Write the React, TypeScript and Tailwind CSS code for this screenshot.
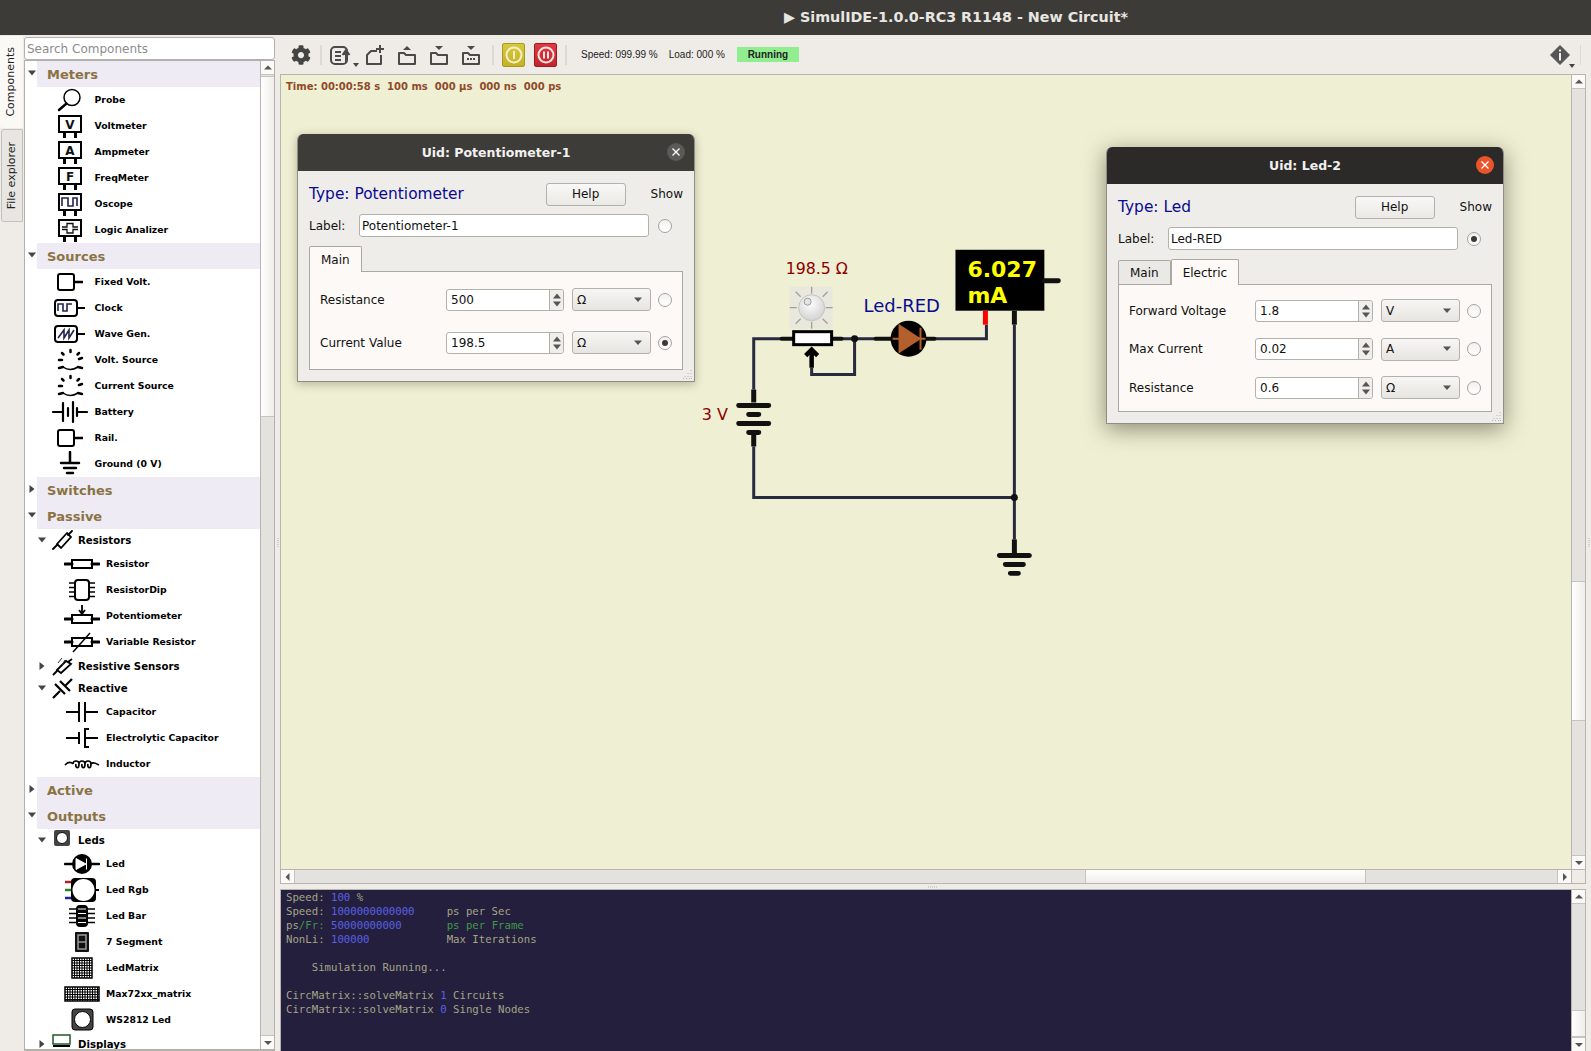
import { FaCog } from "react-icons/fa"

type TreeRow =
    | { kind: "cat"; label: string; open: boolean }
    | { kind: "sub"; label: string; icon: string; open: boolean }
    | { kind: "item"; label: string; icon: string; level: 1 | 2 }

const treeRows: TreeRow[] = [
    { kind: "cat", label: "Meters", open: true },
    { kind: "item", label: "Probe", icon: "probe", level: 1 },
    { kind: "item", label: "Voltmeter", icon: "V", level: 1 },
    { kind: "item", label: "Ampmeter", icon: "A", level: 1 },
    { kind: "item", label: "FreqMeter", icon: "F", level: 1 },
    { kind: "item", label: "Oscope", icon: "oscope", level: 1 },
    { kind: "item", label: "Logic Analizer", icon: "logic", level: 1 },
    { kind: "cat", label: "Sources", open: true },
    { kind: "item", label: "Fixed Volt.", icon: "fixed", level: 1 },
    { kind: "item", label: "Clock", icon: "clock", level: 1 },
    { kind: "item", label: "Wave Gen.", icon: "wave", level: 1 },
    { kind: "item", label: "Volt. Source", icon: "source", level: 1 },
    { kind: "item", label: "Current Source", icon: "source", level: 1 },
    { kind: "item", label: "Battery", icon: "battery", level: 1 },
    { kind: "item", label: "Rail.", icon: "fixed", level: 1 },
    { kind: "item", label: "Ground (0 V)", icon: "ground", level: 1 },
    { kind: "cat", label: "Switches", open: false },
    { kind: "cat", label: "Passive", open: true },
    { kind: "sub", label: "Resistors", icon: "resistors", open: true },
    { kind: "item", label: "Resistor", icon: "resistor", level: 2 },
    { kind: "item", label: "ResistorDip", icon: "dip", level: 2 },
    { kind: "item", label: "Potentiometer", icon: "pot", level: 2 },
    { kind: "item", label: "Variable Resistor", icon: "variable", level: 2 },
    { kind: "sub", label: "Resistive Sensors", icon: "sensors", open: false },
    { kind: "sub", label: "Reactive", icon: "reactive", open: true },
    { kind: "item", label: "Capacitor", icon: "capacitor", level: 2 },
    { kind: "item", label: "Electrolytic Capacitor", icon: "electro", level: 2 },
    { kind: "item", label: "Inductor", icon: "inductor", level: 2 },
    { kind: "cat", label: "Active", open: false },
    { kind: "cat", label: "Outputs", open: true },
    { kind: "sub", label: "Leds", icon: "leds", open: true },
    { kind: "item", label: "Led", icon: "led", level: 2 },
    { kind: "item", label: "Led Rgb", icon: "rgb", level: 2 },
    { kind: "item", label: "Led Bar", icon: "bar", level: 2 },
    { kind: "item", label: "7 Segment", icon: "seg", level: 2 },
    { kind: "item", label: "LedMatrix", icon: "matrix", level: 2 },
    { kind: "item", label: "Max72xx_matrix", icon: "max", level: 2 },
    { kind: "item", label: "WS2812 Led", icon: "ws", level: 2 },
    { kind: "sub", label: "Displays", icon: "displays", open: false },
]

function Caret({ open }: { open: boolean }) {
    return (
        <svg width="8" height="8" viewBox="0 0 8 8" className="shrink-0">
            <path d={open ? "M0 1.5h8L4 6.5z" : "M1.5 0v8L6.5 4z"} fill="#444" />
        </svg>
    )
}

function gridLines(x: number, y: number, w: number, h: number, step: number) {
    const lines = []
    for (let i = x + step; i < x + w; i += step) lines.push(`M${i} ${y}V${y + h}`)
    for (let j = y + step; j < y + h; j += step) lines.push(`M${x} ${j}H${x + w}`)
    return lines.join("")
}

function TreeIcon({ name }: { name: string }) {
    const k = { fill: "none", stroke: "#000", strokeWidth: 2 }
    const navy = { fill: "none", stroke: "#22224c", strokeWidth: 1.6 }
    const meterBody = (
        <>
            <rect x="7" y="3" width="22" height="16" {...k} />
            <path d="M12.5 19v6M23.5 19v6" stroke="#000" strokeWidth="3" />
        </>
    )
    switch (name) {
        case "probe":
            return (
                <>
                    <circle cx="20" cy="10.5" r="8" fill="none" stroke="#000" strokeWidth="1.5" />
                    <path d="M14.5 16.5L7 23" stroke="#000" strokeWidth="2.5" strokeLinecap="round" />
                </>
            )
        case "V":
        case "A":
        case "F":
            return (
                <>
                    {meterBody}
                    <text x="18" y="15.5" textAnchor="middle" fontSize="12" fontWeight="700" fontFamily="DejaVu Sans" fill="#111">
                        {name}
                    </text>
                </>
            )
        case "oscope":
            return (
                <>
                    {meterBody}
                    <path d="M10 15V7h6v8h5V7h4v8" {...navy} />
                </>
            )
        case "logic":
            return (
                <>
                    {meterBody}
                    <path d="M10 10h5V6.500h6V10h5M10 12.500h5V16h6v-3.500h5" fill="none" stroke="#111" strokeWidth="1.300" />
                </>
            )
        case "fixed":
            return (
                <>
                    <rect x="6" y="5" width="16" height="16" rx="2" {...k} />
                    <path d="M22 13h9" stroke="#000" strokeWidth="2.500" />
                </>
            )
        case "clock":
            return (
                <>
                    <rect x="3" y="5" width="22" height="16" rx="3" {...k} />
                    <path d="M25 13h8" stroke="#000" strokeWidth="2" />
                    <path d="M6 16V9h5v7h4V9h5" {...navy} />
                </>
            )
        case "wave":
            return (
                <>
                    <rect x="3" y="5" width="22" height="16" rx="3" {...k} />
                    <path d="M25 13h8" stroke="#000" strokeWidth="2" />
                    <path d="M6 17l6-8v8l5-8v8l5-8" {...navy} />
                </>
            )
        case "source":
            return (
                <>
                    <path
                        d="M18.500 3v2M10 6l1.500 1.500M27 6l-1.500 1.500M7 13h3M27 12l3-1M7 21l4-1M30 21l-4-1"
                        stroke="#000"
                        strokeWidth="2.500"
                        strokeLinecap="round"
                    />
                    <path d="M11 20q7 5 15 0" fill="none" stroke="#000" strokeWidth="1.500" />
                </>
            )
        case "battery":
            return (
                <path
                    d="M1 13h10M11 4v18M16 9v8M21 3v20M25 9v8M26 13h9"
                    stroke="#000"
                    strokeWidth="2.200"
                    strokeLinecap="round"
                    fill="none"
                />
            )
        case "ground":
            return <path d="M18 1v10M9 12h18M12 17h12M15 22h6" stroke="#000" strokeWidth="2.500" strokeLinecap="round" />
        case "resistor":
            return (
                <>
                    <rect x="8" y="9" width="20" height="8" fill="none" stroke="#000" strokeWidth="2" />
                    <path d="M1 13h7M28 13h7" stroke="#000" strokeWidth="3" strokeLinecap="round" />
                </>
            )
        case "dip":
            return (
                <>
                    <rect x="11" y="3" width="14" height="20" rx="3" {...k} />
                    <path d="M5 6h6M5 10.500h6M5 15h6M5 19.500h6M25 6h6M25 10.500h6M25 15h6M25 19.500h6" stroke="#000" strokeWidth="1.500" />
                </>
            )
        case "pot":
            return (
                <>
                    <rect x="8" y="12" width="20" height="8" fill="none" stroke="#000" strokeWidth="2" />
                    <path d="M1 16h7M28 16h7" stroke="#000" strokeWidth="3" strokeLinecap="round" />
                    <path d="M18 2v9M15 7l3 4 3-4" fill="none" stroke="#000" strokeWidth="1.800" />
                </>
            )
        case "variable":
            return (
                <>
                    <rect x="8" y="9" width="20" height="8" fill="none" stroke="#000" strokeWidth="2" />
                    <path d="M1 13h7M28 13h7" stroke="#000" strokeWidth="3" strokeLinecap="round" />
                    <path d="M9 23L26 4" stroke="#000" strokeWidth="1.500" />
                </>
            )
        case "capacitor":
            return <path d="M2 13h13M15 3v20M21 3v20M21 13h13" stroke="#000" strokeWidth="2" fill="none" />
        case "electro":
            return <path d="M2 13h13M15 7v12M25 4h-4v18h4M21 13h13" stroke="#000" strokeWidth="2" fill="none" />
        case "inductor":
            return (
                <path
                    d="M1 14c3-3 6-3 8-1M9 13c0-4 6-4 6 0c0 5-4 5-3 0M15 13c0-4 6-4 6 0c0 5-4 5-3 0M21 13c0-4 6-4 6 0c0 5-4 5-3 0M27 13c2-2 4-1 8 1"
                    fill="none"
                    stroke="#000"
                    strokeWidth="1.700"
                />
            )
        case "led":
            return (
                <>
                    <circle cx="18" cy="13" r="10" fill="#000" />
                    <path d="M1 13h34" stroke="#000" strokeWidth="2.500" strokeLinecap="round" />
                    <path d="M12 7.500v11L22 13zM22.500 7.500v11" fill="#fff" stroke="#fff" strokeWidth="1" />
                </>
            )
        case "rgb":
            return (
                <>
                    <path d="M1 5h8" stroke="#a22" strokeWidth="2.500" />
                    <path d="M1 13h8" stroke="#282" strokeWidth="2.500" />
                    <path d="M1 21h8" stroke="#22a" strokeWidth="2.500" />
                    <path d="M32 13h3" stroke="#000" strokeWidth="2" />
                    <rect x="7" y="1" width="25" height="24" rx="4" fill="#000" />
                    <circle cx="19.500" cy="13" r="11" fill="#fff" />
                </>
            )
        case "bar":
            return (
                <>
                    <rect x="12" y="2" width="12" height="22" rx="4" fill="#000" />
                    <path d="M5 6h26M5 10.500h26M5 15h26M5 19.500h26" stroke="#000" strokeWidth="1.700" />
                    <path d="M14 6h8M14 10.500h8M14 15h8M14 19.500h8" stroke="#fff" strokeWidth="1" />
                </>
            )
        case "seg":
            return (
                <>
                    <rect x="11" y="3" width="14" height="20" rx="1" fill="#111" />
                    <path d="M14 6h8v14h-8zM14 13h8" fill="none" stroke="#9a9a9a" strokeWidth="1.500" />
                </>
            )
        case "matrix":
            return (
                <>
                    <rect x="8" y="3" width="20" height="20" fill="#fff" stroke="#000" strokeWidth="1.500" />
                    <path d={gridLines(8, 3, 20, 20, 2.500)} stroke="#000" strokeWidth="1" />
                </>
            )
        case "max":
            return (
                <>
                    <rect x="1" y="6" width="34" height="14" fill="#fff" stroke="#000" strokeWidth="1.500" />
                    <path d={gridLines(1, 6, 34, 14, 2.500)} stroke="#000" strokeWidth="1" />
                </>
            )
        case "ws":
            return (
                <>
                    <rect x="8" y="2" width="21" height="21" rx="3" fill="#444" stroke="#000" strokeWidth="1" />
                    <circle cx="18.500" cy="12.500" r="8" fill="#fff" stroke="#000" strokeWidth="1" />
                </>
            )
        default:
            return null
    }
}

function SubIcon({ name }: { name: string }) {
    switch (name) {
        case "resistors":
            return (
                <path d="M2 20l4-4M17 6l4-4M6 15L16 4l4 4L10 19z" fill="none" stroke="#000" strokeWidth="1.800" strokeLinecap="round" />
            )
        case "sensors":
            return (
                <>
                    <path d="M2 20l4-4M17 7l4-3M6 15L15 6l5 3L10 18z" fill="none" stroke="#000" strokeWidth="1.800" />
                    <path d="M7 8l4-5M11 10l3-5" stroke="#333" strokeWidth="1" />
                </>
            )
        case "reactive":
            return <path d="M2 21l7-7M14 9l7-7M4 7l10 10M9 4l10 10" fill="none" stroke="#000" strokeWidth="2.200" />
        case "leds":
            return (
                <>
                    <rect x="3" y="1" width="16" height="16" rx="2" fill="#444" />
                    <circle cx="11" cy="9" r="5.500" fill="#fff" stroke="#111" strokeWidth="1" />
                </>
            )
        case "displays":
            return (
                <>
                    <rect x="2" y="2" width="17" height="9" fill="#fff" stroke="#1d5a2a" strokeWidth="1.500" />
                    <path d="M2 13h17" stroke="#000" strokeWidth="2" />
                </>
            )
        default:
            return null
    }
}

function TreeList() {
    return (
        <div className="h-full w-[235px] overflow-hidden bg-white text-black">
            {treeRows.map((row) => {
                if (row.kind === "cat") {
                    return (
                        <div key={row.label} className="flex h-[26px] items-center">
                            <div className="flex w-[12px] justify-center pb-[2px] pl-[1px]">
                                <Caret open={row.open} />
                            </div>
                            <div className="flex h-full flex-1 items-center bg-[#efebf5] pl-[10px] text-[13px] leading-none font-bold text-[#8a7342]">
                                {row.label}
                            </div>
                        </div>
                    )
                }
                if (row.kind === "sub") {
                    return (
                        <div key={row.label} className="flex h-[22px] items-center text-[10.200px] font-bold">
                            <div className="ml-[13px]">
                                <Caret open={row.open} />
                            </div>
                            <svg width="22" height="22" viewBox="0 0 22 22" className="ml-[5px] shrink-0">
                                <SubIcon name={row.icon} />
                            </svg>
                            <span className="ml-[5px] pt-[2px]">{row.label}</span>
                        </div>
                    )
                }
                return (
                    <div key={row.label} className="flex h-[26px] items-center text-[9.300px] font-bold">
                        <svg
                            width="36"
                            height="26"
                            viewBox="0 0 36 26"
                            className={row.level === 1 ? "ml-[27px] shrink-0" : "ml-[39px] shrink-0"}
                        >
                            <TreeIcon name={row.icon} />
                        </svg>
                        <span className={row.level === 1 ? "ml-[6.500px]" : "ml-[6px]"}>{row.label}</span>
                    </div>
                )
            })}
        </div>
    )
}

function ScrollArrow({ dir }: { dir: "up" | "down" | "left" | "right" }) {
    const d = {
        up: "M1 6.500h8L5 2.500z",
        down: "M1 3h8L5 7z",
        left: "M6.500 1v8L2.500 5z",
        right: "M3 1v8L7 5z",
    }[dir]
    return (
        <svg width="10" height="10" viewBox="0 0 10 10">
            <path d={d} fill="#555" />
        </svg>
    )
}

// before / thumb are px heights of the track part above the thumb and of the thumb
function VScrollbar({ before, thumb }: { before: number; thumb: number }) {
    return (
        <div className="flex h-full w-[14px] shrink-0 flex-col border-l border-[#b8b5b0] bg-[#e3e2de]">
            <div className="flex h-[14px] shrink-0 items-center justify-center border-b border-[#c6c4bf] bg-[#fbfaf8]">
                <ScrollArrow dir="up" />
            </div>
            <div className="min-h-0 flex-1">
                <div style={{ height: before }} />
                <div style={{ height: thumb }} className="border-y border-[#c6c4bf] bg-gradient-to-r from-white to-[#f0eeea]" />
            </div>
            <div className="flex h-[14px] shrink-0 items-center justify-center border-t border-[#c6c4bf] bg-[#fbfaf8]">
                <ScrollArrow dir="down" />
            </div>
        </div>
    )
}

function Radio({ checked }: { checked?: boolean }) {
    return (
        <div className="flex h-[14px] w-[14px] shrink-0 items-center justify-center rounded-full border border-[#a5a39e] bg-gradient-to-b from-[#f2f0ed] to-white">
            {checked && <div className="h-[6px] w-[6px] rounded-full bg-[#3a3a3a]" />}
        </div>
    )
}

function SpinBox({ value }: { value: string }) {
    return (
        <div className="flex h-[22px] w-[120px] items-center rounded-[3px] border border-[#b3b1ac] bg-white">
            <span className="flex-1 pl-[4px]">{value}</span>
            <div className="flex h-full w-[14px] flex-col items-center justify-center gap-[2px] rounded-r-[3px] border-l border-[#b3b1ac] bg-[#f0eeeb]">
                <svg width="8" height="6" viewBox="0 0 8 6">
                    <path d="M0 5.500h8L4 .5z" fill="#555" />
                </svg>
                <svg width="8" height="6" viewBox="0 0 8 6">
                    <path d="M0 .5h8L4 5.500z" fill="#555" />
                </svg>
            </div>
        </div>
    )
}

function Combo({ value }: { value: string }) {
    return (
        <div className="flex h-[23px] w-[79px] items-center justify-between rounded-[3px] border border-[#b3b1ac] bg-gradient-to-b from-[#f7f6f4] to-[#e7e5e1] pr-[7px] pl-[4px]">
            <span>{value}</span>
            <svg width="9" height="6" viewBox="0 0 9 6">
                <path d="M0 .5h8L4 5z" fill="#555" />
            </svg>
        </div>
    )
}

type DialogRow = { name: string; value: string; unit: string; checked?: boolean }

function PropDialog(props: {
    uid: string
    type: string
    label: string
    labelShown?: boolean
    tabs: string[]
    activeTab: string
    rows: DialogRow[]
    focused?: boolean
    className: string
    panelClass: string
}) {
    const { uid, type, label, labelShown, tabs, activeTab, rows, focused, className, panelClass } = props
    return (
        <div
            className={`absolute w-[398px] overflow-hidden rounded-t-[6px] border border-t-0 border-[#8f8d86] bg-[#efedea] text-[12px] text-[#111] ${className} ${
                focused ? "shadow-[0_5px_22px_rgba(40,40,20,0.5)]" : "shadow-[0_2px_10px_rgba(40,40,20,0.3)]"
            }`}
        >
            <div
                className={`relative flex h-[37px] items-center justify-center pt-[1px] text-[12.500px] font-bold text-[#f2f1ef] ${
                    focused ? "bg-[#2c2a28]" : "bg-[#3e3c39]"
                }`}
            >
                {`Uid: ${uid}`}
                <div
                    className={`absolute top-[9px] right-[9px] flex h-[18px] w-[18px] items-center justify-center rounded-full ${
                        focused ? "bg-[#e9542a]" : "bg-[#5c5a58]"
                    }`}
                >
                    <svg width="10" height="10" viewBox="0 0 10 10">
                        <path d="M1.500 1.500l7 7M8.500 1.500l-7 7" stroke="#fff" strokeWidth="1.300" />
                    </svg>
                </div>
            </div>
            <div className="relative pt-[12px] pr-[10px] pb-[11px] pl-[11px]">
                <div className="flex h-[22px] items-center">
                    <span className="flex-1 pt-[2px] text-[15.400px] text-[#0a0a90]">{`Type: ${type}`}</span>
                    <div className="flex h-[23px] w-[80px] items-center justify-center rounded-[3px] border border-[#b3b1ac] bg-gradient-to-b from-[#f9f8f6] to-[#ebe9e5]">
                        Help
                    </div>
                    <span className="ml-[25px] pr-[1px]">Show</span>
                </div>
                <div className="mt-[9px] flex h-[23px] items-center">
                    <span className="w-[50px] shrink-0">Label:</span>
                    <div className="flex h-[23px] w-[290px] items-center rounded-[3px] border border-[#b3b1ac] bg-white pl-[2px]">{label}</div>
                    <div className="ml-[9px]">
                        <Radio checked={labelShown} />
                    </div>
                </div>
                <div className="mt-[9px] flex h-[25px] items-end">
                    {tabs.map((tab) =>
                        tab === activeTab ? (
                            <div
                                key={tab}
                                className="relative z-10 -mb-px flex h-[26px] items-center rounded-t-[2px] border border-b-0 border-[#aaa8a3] bg-[#fcf9f6] px-[11px]"
                            >
                                {tab}
                            </div>
                        ) : (
                            <div key={tab} className="flex h-[24px] items-center rounded-t-[2px] border border-b-0 border-[#aaa8a3] bg-[#ebe9e5] px-[11px]">
                                {tab}
                            </div>
                        ),
                    )}
                </div>
                <div className={`flex w-[374px] flex-col border border-[#aaa8a3] bg-[#fcf9f6] pr-[10px] pl-[10px] ${panelClass}`}>
                    {rows.map((row) => (
                        <div key={row.name} className="flex h-[23px] items-center">
                            <span className="w-[126px] shrink-0">{row.name}</span>
                            <SpinBox value={row.value} />
                            <div className="ml-[8px]">
                                <Combo value={row.unit} />
                            </div>
                            <div className="ml-[7px]">
                                <Radio checked={row.checked} />
                            </div>
                        </div>
                    ))}
                </div>
                <svg width="11" height="11" viewBox="0 0 11 11" className="absolute right-[1px] bottom-[1px]">
                    <path d="M9 1v1M6 4v1M9 4v1M3 7v1M6 7v1M9 7v1M1 9.500h1M4 9.500h1M7 9.500h1M9 9.500h1" stroke="#b5b3ae" strokeWidth="1" />
                </svg>
            </div>
        </div>
    )
}

const wireCol = "#282a40"

function Circuit() {
    return (
        <svg viewBox="281 75 1291 795" className="absolute inset-0 h-full w-full">
            <defs>
                <radialGradient id="knob" cx="45%" cy="35%" r="70%">
                    <stop offset="0%" stopColor="#fdfdfd" />
                    <stop offset="100%" stopColor="#cfcfcf" />
                </radialGradient>
            </defs>
            {/* wires */}
            <path
                d="M754 390V339H782M842 339H876M935 339H987V325M1015 325V540M754 447V498H1015M812 368V375H855V339"
                fill="none"
                stroke={wireCol}
                strokeWidth="3"
            />
            <circle cx="855" cy="339" r="3.500" fill="#111" />
            <circle cx="1015" cy="498" r="3.500" fill="#111" />
            {/* battery */}
            <path d="M754 390v13M754 433v14" stroke="#111" strokeWidth="5" />
            <path d="M739 406h30M749 415h10M739 424h30M749 433h10" stroke="#111" strokeWidth="5" strokeLinecap="round" />
            <text x="702" y="420" fontFamily="DejaVu Sans" fontSize="16" fill="#8b0000">
                3 V
            </text>
            {/* potentiometer */}
            <rect x="790" y="287" width="43" height="42" fill="#e8e8dc" />
            <path
                d="M812 287v7M812 322v7M790 308h7M826 308h7M796 292l5 5M828 292l-5 5M796 324l5-5M828 324l-5-5"
                stroke="#a0a09c"
                strokeWidth="1.300"
            />
            <circle cx="812" cy="308" r="13" fill="url(#knob)" stroke="#c4c4c0" />
            <circle cx="808" cy="302" r="3.500" fill="#e4e4e4" stroke="#9c9c9c" />
            <path d="M782 339h12M832 339h10" stroke="#111" strokeWidth="4" strokeLinecap="round" />
            <rect x="794" y="332" width="38" height="13" fill="#fff" stroke="#000" strokeWidth="3" />
            <path d="M812 368v-18M806 356l6-6 6 6" fill="none" stroke="#000" strokeWidth="4.500" />
            <text x="786" y="274" fontFamily="DejaVu Sans" fontSize="15.800" fill="#8b0000">
                198.5 Ω
            </text>
            {/* led */}
            <text x="864" y="312" fontFamily="DejaVu Sans" fontSize="18" fill="#0a0a90">
                Led-RED
            </text>
            <path d="M876 339h16M927 339h8" stroke="#111" strokeWidth="4" strokeLinecap="round" />
            <circle cx="909" cy="339" r="18" fill="#000" />
            <path d="M900 326v26l20-13zM893 339h33M921 328v22" fill="#b45f2e" stroke="#b45f2e" strokeWidth="2" />
            {/* ampmeter */}
            <rect x="956" y="250" width="89" height="61" fill="#000" />
            <path d="M1045 281h14" stroke="#111" strokeWidth="5" strokeLinecap="round" />
            <path d="M986 311v14" stroke="#f00" strokeWidth="5" />
            <path d="M1015 311v14" stroke="#111" strokeWidth="5" />
            <text x="968" y="277" fontFamily="DejaVu Sans" fontSize="22" fontWeight="700" fill="#ff0">
                6.027
            </text>
            <text x="968" y="303" fontFamily="DejaVu Sans" fontSize="22" fontWeight="700" fill="#ff0">
                mA
            </text>
            {/* ground */}
            <path d="M1015 540v16" stroke="#111" strokeWidth="5" />
            <path d="M1000 556h30M1006 565h18M1011 574h8" stroke="#111" strokeWidth="5" strokeLinecap="round" />
        </svg>
    )
}

function PowerButton({ color }: { color: "yellow" | "red" }) {
    const yellow = color === "yellow"
    return (
        <div
            className={`flex h-[24px] w-[23px] items-center justify-center rounded-[2px] border ${
                yellow ? "border-[#a89a20] bg-gradient-to-b from-[#d8c83c] to-[#c4b128]" : "border-[#9c1c22] bg-gradient-to-b from-[#e03a40] to-[#c2262c]"
            }`}
        >
            <svg width="18" height="18" viewBox="0 0 18 18">
                <circle cx="9" cy="9" r="7.500" fill="none" stroke={yellow ? "#f4efc4" : "#fbe4e4"} strokeWidth="2" />
                {yellow ? (
                    <path d="M9 5v8" stroke="#f4efc4" strokeWidth="2" />
                ) : (
                    <path d="M7 5.500v7M11 5.500v7" stroke="#fbe4e4" strokeWidth="2" />
                )}
            </svg>
        </div>
    )
}

function Sep() {
    return <div className="h-[20px] w-[2px] shrink-0 bg-[#dcdad5]" />
}

function Toolbar() {
    const ico = { fill: "none", stroke: "#4a4a4a", strokeWidth: 2, strokeLinejoin: "round" as const }
    return (
        <div className="flex h-[39px] shrink-0 items-center pl-[11px] text-[#222]">
            <FaCog className="h-[20px] w-[20px] shrink-0 text-[#444]" />
            <div className="ml-[9px]"><Sep /></div>
            <svg width="24" height="24" viewBox="0 0 24 24" className="ml-[7px] shrink-0">
                <rect x="2" y="4" width="16" height="17" rx="4" {...ico} />
                <path d="M6 9h6M6 13h6M6 17h6" {...ico} />
                <path d="M17 20V9M13.500 12L17 7l3.500 5" fill="#4a4a4a" stroke="#4a4a4a" strokeWidth="2" />
            </svg>
            <svg width="6" height="4" viewBox="0 0 6 4" className="mt-[20px] shrink-0">
                <path d="M0 0h6L3 4z" fill="#444" />
            </svg>
            <svg width="20" height="22" viewBox="0 0 20 22" className="ml-[6px] shrink-0">
                <path d="M12 7H6L2 11v9h14V11" {...ico} />
                <path d="M15 1v8M11 5h8" stroke="#4a4a4a" strokeWidth="2" />
            </svg>
            <svg width="20" height="22" viewBox="0 0 20 22" className="ml-[12px] shrink-0">
                <path d="M2 20V9h5l2 2h9v9z" {...ico} />
                <path d="M6 6l4-4 4 4z" fill="#4a4a4a" />
            </svg>
            <svg width="20" height="22" viewBox="0 0 20 22" className="ml-[12px] shrink-0">
                <path d="M2 20V9h5l2 2h9v9z" {...ico} />
                <path d="M6 2l4 4 4-4z" fill="#4a4a4a" />
            </svg>
            <svg width="20" height="22" viewBox="0 0 20 22" className="ml-[12px] shrink-0">
                <path d="M2 20V9h5l2 2h9v9z" {...ico} />
                <path d="M6 2l4 4 4-4z" fill="#4a4a4a" />
                <path d="M6 15h2M9 15h2M12 15h2" stroke="#4a4a4a" strokeWidth="2" />
            </svg>
            <div className="ml-[11px]"><Sep /></div>
            <div className="ml-[8px]"><PowerButton color="yellow" /></div>
            <div className="ml-[9px]"><PowerButton color="red" /></div>
            <div className="ml-[8px]"><Sep /></div>
            <span className="ml-[14px] font-['Liberation_Sans',sans-serif] text-[10px]">Speed: 099.99 %</span>
            <span className="ml-[11px] font-['Liberation_Sans',sans-serif] text-[10px]">Load: 000 %</span>
            <div className="ml-[12px] flex h-[15px] w-[62px] items-center justify-center bg-[#90ee90] font-['Liberation_Sans',sans-serif] text-[10px] font-bold">
                Running
            </div>
            <div className="flex-1" />
            <svg width="20" height="20" viewBox="0 0 20 20" className="shrink-0">
                <path d="M10 0.500L19.500 10 10 19.500 .5 10z" fill="#555" stroke="#555" strokeLinejoin="round" strokeWidth="1" />
                <path d="M10 4.500v2M10 8v7.500" stroke="#f0eeea" strokeWidth="2" />
            </svg>
            <svg width="6" height="4" viewBox="0 0 6 4" className="mt-[22px] ml-[-1px] shrink-0">
                <path d="M0 0h6L3 4z" fill="#444" />
            </svg>
            <div className="mr-[5px] ml-[5px] h-[20px] w-px bg-[#dcdad5]" />
        </div>
    )
}

function Console() {
    const b = "text-[#5a5fe6]"
    const g = "text-[#3f9a48]"
    return (
        <pre className="h-full min-w-0 flex-1 overflow-hidden bg-[#231f3d] pt-[1px] pl-[5px] font-['DejaVu_Sans_Mono',monospace] text-[10.680px] leading-[14px] text-[#a5a585]">
            {"Speed: "}<span className={b}>100</span>{" %\n"}
            {"Speed: "}<span className={b}>1000000000000</span>{"     ps per Sec\n"}
            {"ps"}<span className={g}>/Fr:</span>{" "}<span className={b}>50000000000</span>{"       "}<span className={g}>ps per Frame</span>{"\n"}
            {"NonLi: "}<span className={b}>100000</span>{"            Max Iterations\n"}
            {"\n"}
            {"    Simulation Running...\n"}
            {"\n"}
            {"CircMatrix::solveMatrix "}<span className={b}>1</span>{" Circuits\n"}
            {"CircMatrix::solveMatrix "}<span className={b}>0</span>{" Single Nodes"}
        </pre>
    )
}

// dotted handle of a splitter, centred by its parent
function SplitGrip({ vertical }: { vertical?: boolean }) {
    return vertical ? (
        <svg width="2" height="10" viewBox="0 0 2 10">
            <path d="M1 0v10" stroke="#b5b3ae" strokeWidth="1" strokeDasharray="1 1" />
        </svg>
    ) : (
        <svg width="10" height="2" viewBox="0 0 10 2">
            <path d="M0 1h10" stroke="#b5b3ae" strokeWidth="1" strokeDasharray="1 1" />
        </svg>
    )
}

export default function App() {
    return (
        <div className="flex h-[1051px] w-[1591px] flex-col overflow-hidden bg-[#efece8] font-['DejaVu_Sans',sans-serif]">
            <div className="flex h-[35px] shrink-0 items-center justify-center bg-[#3c3b37] pl-[321px] text-[14.300px] font-bold text-[#e8e6e1]">
                ▶ SimulIDE-1.0.0-RC3 R1148 - New Circuit*
            </div>
            <div className="flex min-h-0 flex-1">
                {/* sidebar */}
                <div className="flex w-[24px] shrink-0 flex-col pt-[1px] text-[11px] text-[#222]">
                    <div className="flex h-[92px] w-[23px] items-center justify-center rounded-l-[2px] border-r border-[#f9f7f4] bg-[#fbf9f6]">
                        <span className="rotate-180 [writing-mode:vertical-rl]">Components</span>
                    </div>
                    <div className="mt-[1px] ml-[1px] flex h-[93px] w-[22px] items-center justify-center rounded-l-[3px] border border-[#c4c2bd] bg-[#e8e6e2]">
                        <span className="rotate-180 [writing-mode:vertical-rl]">File explorer</span>
                    </div>
                </div>
                <div className="flex w-[251px] shrink-0 flex-col pt-[2px]">
                    <div className="flex h-[23px] shrink-0 items-center rounded-[3px] border border-[#b3b1ac] bg-white pl-[2px] text-[12px] text-[#8c8c8c]">
                        Search Components
                    </div>
                    <div className="flex min-h-0 flex-1 border border-b-2 border-[#b3b1ac]">
                        <TreeList />
                        <VScrollbar before={1} thumb={341} />
                    </div>
                </div>
                <div className="flex w-[5px] shrink-0 items-center justify-center">
                    <SplitGrip vertical />
                </div>
                {/* main column */}
                <div className="flex w-[1306px] shrink-0 flex-col">
                    <Toolbar />
                    <div className="flex h-[810px] shrink-0 flex-col border border-[#b8b5b0] border-b-[#b8b5b0]">
                        <div className="flex min-h-0 flex-1">
                            <div className="relative h-full min-w-0 flex-1 overflow-hidden bg-[#efefd3]">
                                <div className="absolute top-[4px] left-[5px] text-[10px] font-bold whitespace-pre text-[#8f4a2a]">
                                    Time: 00:00:58 s  100 ms  000 µs  000 ns  000 ps
                                </div>
                                <Circuit />
                                <PropDialog
                                    uid="Potentiometer-1"
                                    type="Potentiometer"
                                    label="Potentiometer-1"
                                    tabs={["Main"]}
                                    activeTab="Main"
                                    className="top-[59px] left-[16px]"
                                    panelClass="h-[99px] gap-[20px] pt-[16px]"
                                    rows={[
                                        { name: "Resistance", value: "500", unit: "Ω" },
                                        { name: "Current Value", value: "198.5", unit: "Ω", checked: true },
                                    ]}
                                />
                                <PropDialog
                                    uid="Led-2"
                                    type="Led"
                                    label="Led-RED"
                                    labelShown
                                    tabs={["Main", "Electric"]}
                                    activeTab="Electric"
                                    focused
                                    className="top-[72px] left-[825px]"
                                    panelClass="h-[128px] gap-[15.500px] pt-[14px]"
                                    rows={[
                                        { name: "Forward Voltage", value: "1.8", unit: "V" },
                                        { name: "Max Current", value: "0.02", unit: "A" },
                                        { name: "Resistance", value: "0.6", unit: "Ω" },
                                    ]}
                                />
                            </div>
                            <VScrollbar before={492} thumb={140} />
                        </div>
                        <div className="flex h-[14px] shrink-0 border-t border-[#b8b5b0]">
                            <div className="flex min-w-0 flex-1 bg-[#e3e2de]">
                                <div className="flex w-[14px] shrink-0 items-center justify-center border-r border-[#c6c4bf] bg-[#fbfaf8]">
                                    <ScrollArrow dir="left" />
                                </div>
                                <div className="ml-[790px] w-[281px] border-x border-[#c6c4bf] bg-gradient-to-b from-white to-[#f0eeea]" />
                                <div className="flex-1" />
                                <div className="flex w-[14px] shrink-0 items-center justify-center border-l border-[#c6c4bf] bg-[#fbfaf8]">
                                    <ScrollArrow dir="right" />
                                </div>
                            </div>
                            <div className="w-[14px] shrink-0 border-l border-[#b8b5b0]" />
                        </div>
                    </div>
                    <div className="flex h-[5px] shrink-0 items-center justify-center">
                        <SplitGrip />
                    </div>
                    <div className="flex min-h-0 flex-1 border border-b-0 border-[#b8b5b0]">
                        <Console />
                        <VScrollbar before={106} thumb={27} />
                    </div>
                </div>
                <div className="flex w-[5px] shrink-0 items-center justify-center">
                    <SplitGrip vertical />
                </div>
            </div>
        </div>
    )
}
